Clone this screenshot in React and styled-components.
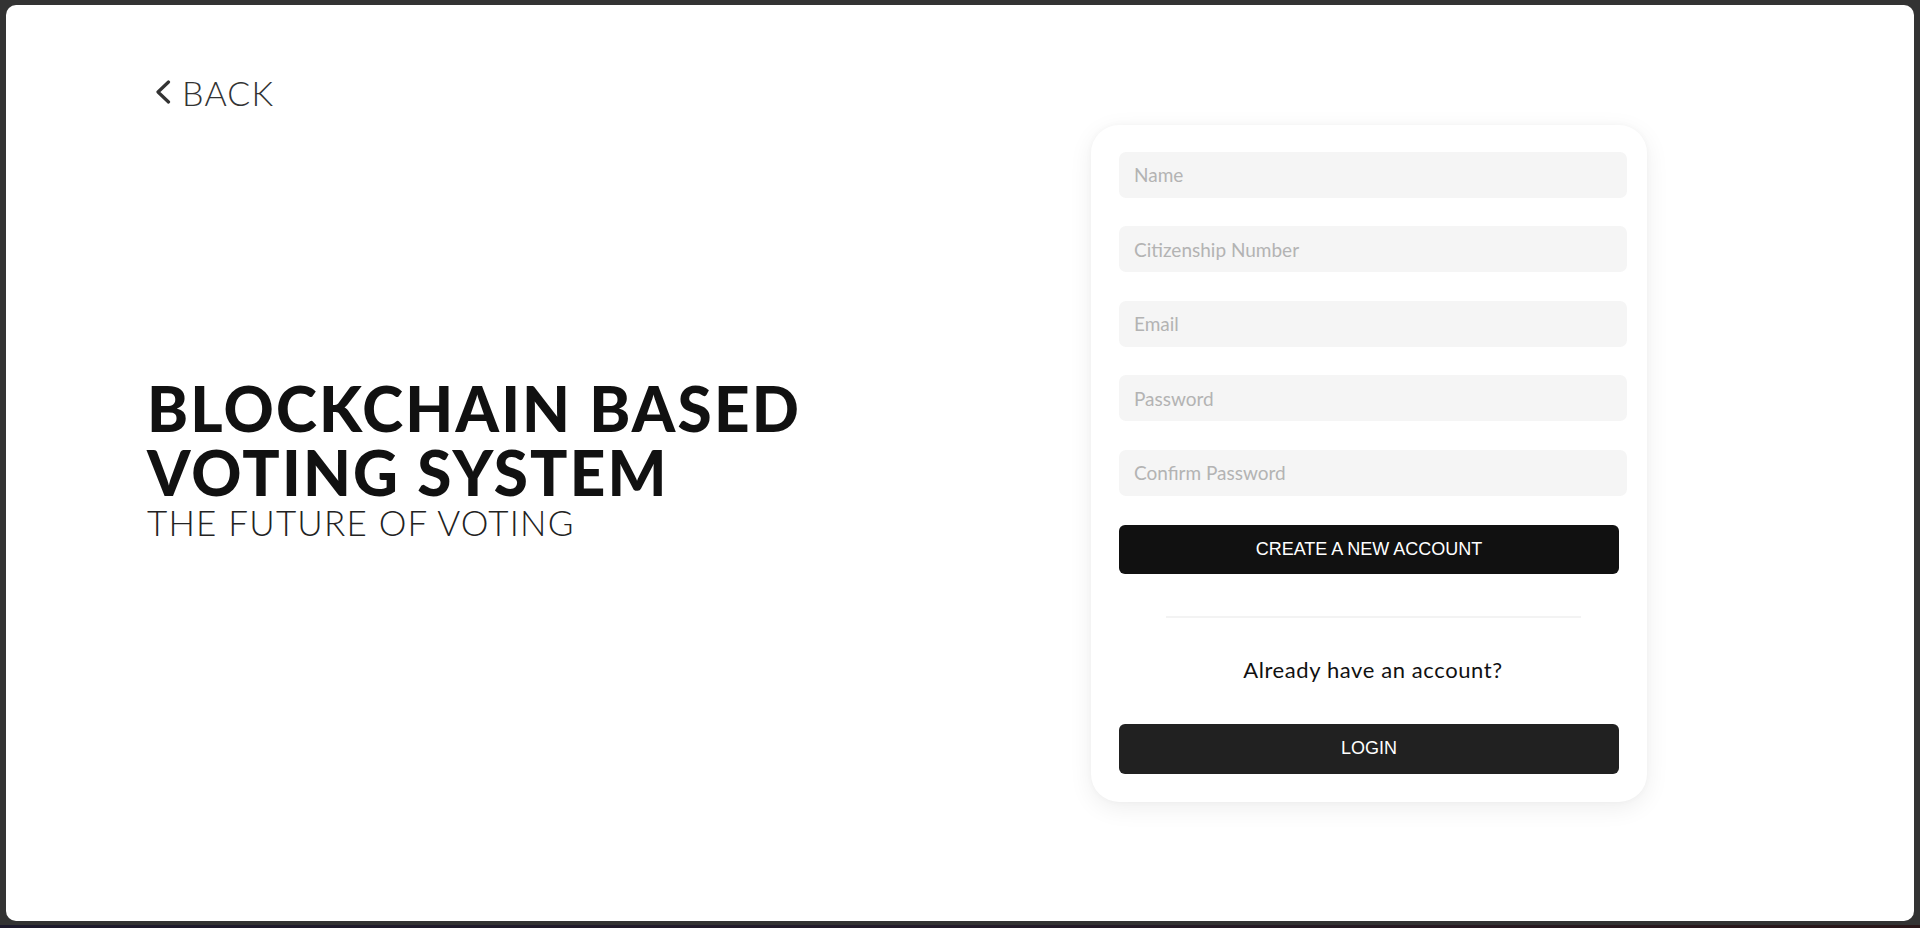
import React from "react";
import styled, { createGlobalStyle } from "styled-components";

const GlobalStyle = createGlobalStyle`
  html, body {
    margin: 0;
    padding: 0;
    background: #333333;
  }
  * { box-sizing: border-box; }
`;

const Frame = styled.div`
  width: 1920px;
  height: 928px;
  background: #333333;
  padding: 5px 6px 0 6px;
  display: flex;
  flex-direction: column;
`;

const Panel = styled.div`
  height: 916px;
  background: #ffffff;
  border-radius: 10px;
  display: grid;
  grid-template-columns: 1fr;
  grid-template-rows: 1fr;
`;

const BottomStrip = styled.div`
  margin-top: auto;
  height: 3px;
  margin-left: -6px;
  margin-right: -6px;
  background: linear-gradient(90deg, #1d1a2c 0%, #231b2a 50%, #2a1719 100%);
`;

const Header = styled.header`
  grid-area: 1 / 1;
  align-self: start;
  padding: 68px 0 0 149px;
  display: flex;
`;

const BackLink = styled.a`
  display: flex;
  align-items: center;
  gap: 11px;
  color: #333333;
  text-decoration: none;
  font-family: "Lato", "Liberation Sans", sans-serif;
  font-weight: 300;
  font-size: 34px;
  line-height: 40px;
  letter-spacing: 1.2px;
  cursor: pointer;
  svg {
    margin-top: -2px;
  }
`;

const Main = styled.main`
  grid-area: 1 / 1;
  align-self: center;
  display: grid;
  grid-template-columns: 1fr 556px;
  align-items: center;
  padding: 0 267px 0 141px;
`;

const TitleBlock = styled.div`
  display: flex;
  flex-direction: column;
  margin-top: -10px;
`;

const Title = styled.h1`
  margin: 0;
  font-family: "Lato", "Liberation Sans", sans-serif;
  font-weight: 900;
  font-size: 62px;
  line-height: 64px;
  color: #111111;
  letter-spacing: 2.2px;
`;

const Subtitle = styled.p`
  margin: 0;
  font-family: "Lato", "Liberation Sans", sans-serif;
  font-weight: 300;
  font-size: 35px;
  line-height: 36px;
  color: #222222;
  letter-spacing: 1.2px;
`;

const Card = styled.form`
  width: 556px;
  background: #ffffff;
  border-radius: 28px;
  box-shadow: 0 6px 24px rgba(0, 0, 0, 0.07), 0 0 6px rgba(0, 0, 0, 0.03);
  padding: 27px 20px 28px 28px;
  display: flex;
  flex-direction: column;
  align-items: flex-start;
`;

const Field = styled.input`
  width: 100%;
  height: 46px;
  border: none;
  outline: none;
  background: #f5f5f5;
  border-radius: 7px;
  padding: 0 15px;
  margin-bottom: ${(p) => (p.$last ? "29px" : "28.5px")};
  font-family: "Lato", "Liberation Sans", sans-serif;
  font-size: 19px;
  color: #333;
  &::placeholder {
    color: #b3b3b3;
  }
`;

const ActionButton = styled.button`
  width: 500px;
  height: ${(p) => (p.$tall ? "50px" : "49px")};
  border: none;
  border-radius: 6px;
  background: ${(p) => p.$bg};
  color: #ffffff;
  font-family: "Liberation Sans", Arial, sans-serif;
  font-size: 18px;
  letter-spacing: 0;
  cursor: pointer;
`;

const Divider = styled.hr`
  align-self: center;
  width: 415px;
  height: 2px;
  border: none;
  background: #f3f3f3;
  margin: 42px 0 39px 0;
`;

const Prompt = styled.p`
  align-self: center;
  margin: 0 0 41px 0;
  font-family: "Lato", "Liberation Sans", sans-serif;
  font-size: 22px;
  line-height: 26px;
  letter-spacing: 0.6px;
  color: #111111;
`;

const ChevronLeft = () => (
  <svg width="16" height="24" viewBox="0 0 16 24" fill="none">
    <polyline
      points="13.5,2 3,12 13.5,22"
      stroke="#333333"
      strokeWidth="3.2"
      strokeLinecap="round"
      strokeLinejoin="round"
    />
  </svg>
);

const fields = ["Name", "Citizenship Number", "Email", "Password", "Confirm Password"];

export default function App() {
  return (
    <>
      <GlobalStyle />
      <Frame>
        <Panel>
          <Main>
            <TitleBlock>
              <Title>
                BLOCKCHAIN BASED
                <br />
                VOTING SYSTEM
              </Title>
              <Subtitle>THE FUTURE OF VOTING</Subtitle>
            </TitleBlock>
            <Card onSubmit={(e) => e.preventDefault()}>
              {fields.map((f, i) => (
                <Field
                  key={f}
                  placeholder={f}
                  type={f.includes("Password") ? "password" : "text"}
                  $last={i === fields.length - 1}
                />
              ))}
              <ActionButton $bg="#111111" type="button">
                CREATE A NEW ACCOUNT
              </ActionButton>
              <Divider />
              <Prompt>Already have an account?</Prompt>
              <ActionButton $bg="#212121" $tall type="button">
                LOGIN
              </ActionButton>
            </Card>
          </Main>
          <Header>
            <BackLink>
              <ChevronLeft />
              BACK
            </BackLink>
          </Header>
        </Panel>
        <BottomStrip />
      </Frame>
    </>
  );
}
